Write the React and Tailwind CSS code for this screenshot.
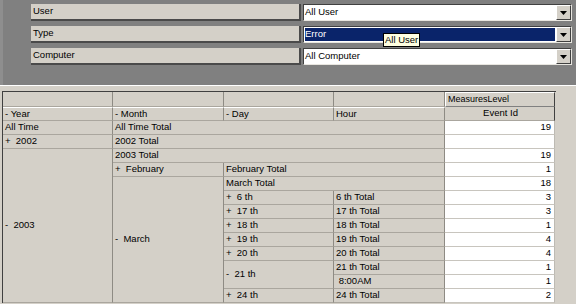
import React from "react";

const font = { fontFamily: '"Liberation Sans", Arial, sans-serif' };

const filters = [
  { label: "User", value: "All User" },
  { label: "Type", value: "Error", selected: true },
  { label: "Computer", value: "All Computer" },
];

const FilterRow = ({ label, value, selected }) => (
  <div className="flex h-[17px] items-stretch">
    <div className="ml-[28px] flex w-[270px] items-center border-r-2 border-b-2 border-[#4a4a4a] bg-[#d4d0c8] pl-[2px] text-[9.5px] text-black">
      {label}
    </div>
    <div className="ml-[2px] flex w-[269px] items-stretch border border-t-[#404040] border-l-[#404040] border-r-[#e8e6e0] border-b-[#e8e6e0] bg-white">
      <div className="flex flex-1 items-stretch p-[1px]">
        <div
          className={
            selected
              ? "flex flex-1 items-center bg-[#0a246a] text-[9.5px] text-white"
              : "flex flex-1 items-center text-[9.5px] text-black"
          }
        >
          {value}
        </div>
      </div>
      <div className="flex w-[15px] items-center justify-center border border-t-white border-l-white border-r-[#404040] border-b-[#404040] bg-[#d4d0c8]">
        <svg width="7" height="4" viewBox="0 0 7 4">
          <path d="M0 0h7L3.5 4z" fill="#000" />
        </svg>
      </div>
    </div>
  </div>
);

const cell = "flex items-center overflow-hidden whitespace-pre border-r border-b border-r-[#8e8b84] border-b-[#aaa69e] bg-[#d4d0c8] pl-[2px] text-[9.5px] text-black";
const val = "flex items-center justify-end border-r border-b border-r-[#bdbab3] border-b-[#c8c5be] bg-white pr-[3px] text-[9.5px] text-black";

export default function App() {
  return (
    <div className="h-[304px] w-[576px] overflow-hidden bg-[#d4d0c8]" style={font}>
      <div className="relative flex h-[85px] flex-col gap-[5px] border-l-[3px] border-[#8e8e8e] bg-[#808080] pt-[4px]">
        {filters.map((f) => (
          <FilterRow key={f.label} {...f} />
        ))}
        <div className="absolute top-[33px] left-[380px] flex h-[14px] items-center border border-black bg-[#ffffe1] px-[1px] text-[9.5px] leading-none text-black">
          All User
        </div>
      </div>

      <div className="border-t border-white pt-[5px]">
        <div className="ml-[2px] grid w-[554px] grid-cols-[110px_111px_110px_111px_110px] grid-rows-[15px_14px_repeat(13,14px)] border-t border-l border-t-[#404040] border-l-[#404040]">
          <div className={`${cell} col-start-1 row-start-1`}></div>
          <div className={`${cell} col-start-2 row-start-1`}></div>
          <div className={`${cell} col-start-3 row-start-1`}></div>
          <div className={`${cell} col-start-4 row-start-1`}></div>
          <div className="col-start-5 row-start-1 flex items-center border-t border-l border-r border-b border-t-white border-l-white border-r-[#404040] border-b-[#808080] bg-[#d4d0c8] pl-[2px] text-[9px] text-black">
            MeasuresLevel
          </div>

          <div className={`${cell} col-start-1 row-start-2 border-t border-t-white`}>- Year</div>
          <div className={`${cell} col-start-2 row-start-2 border-t border-t-white`}>- Month</div>
          <div className={`${cell} col-start-3 row-start-2 border-t border-t-white`}>- Day</div>
          <div className={`${cell} col-start-4 row-start-2 border-t border-t-white`}>Hour</div>
          <div className={`${cell} col-start-5 row-start-2 justify-center border-r-[#404040]`}>Event Id</div>

          <div className={`${cell} col-start-1 row-start-3`}>All Time</div>
          <div className={`${cell} col-start-2 col-span-3 row-start-3`}>All Time Total</div>
          <div className={`${val} col-start-5 row-start-3`}>19</div>

          <div className={`${cell} col-start-1 row-start-4`}>{"+  2002"}</div>
          <div className={`${cell} col-start-2 col-span-3 row-start-4`}>2002 Total</div>
          <div className={`${val} col-start-5 row-start-4`}></div>

          <div className={`${cell} col-start-1 row-start-5 row-span-11`}>{"-  2003"}</div>
          <div className={`${cell} col-start-2 col-span-3 row-start-5`}>2003 Total</div>
          <div className={`${val} col-start-5 row-start-5`}>19</div>

          <div className={`${cell} col-start-2 row-start-6`}>{"+  February"}</div>
          <div className={`${cell} col-start-3 col-span-2 row-start-6`}>February Total</div>
          <div className={`${val} col-start-5 row-start-6`}>1</div>

          <div className={`${cell} col-start-2 row-start-7 row-span-9`}>{"-  March"}</div>
          <div className={`${cell} col-start-3 col-span-2 row-start-7`}>March Total</div>
          <div className={`${val} col-start-5 row-start-7`}>18</div>

          <div className={`${cell} col-start-3 row-start-8`}>{"+  6 th"}</div>
          <div className={`${cell} col-start-4 row-start-8`}>6 th Total</div>
          <div className={`${val} col-start-5 row-start-8`}>3</div>

          <div className={`${cell} col-start-3 row-start-9`}>{"+  17 th"}</div>
          <div className={`${cell} col-start-4 row-start-9`}>17 th Total</div>
          <div className={`${val} col-start-5 row-start-9`}>3</div>

          <div className={`${cell} col-start-3 row-start-10`}>{"+  18 th"}</div>
          <div className={`${cell} col-start-4 row-start-10`}>18 th Total</div>
          <div className={`${val} col-start-5 row-start-10`}>1</div>

          <div className={`${cell} col-start-3 row-start-11`}>{"+  19 th"}</div>
          <div className={`${cell} col-start-4 row-start-11`}>19 th Total</div>
          <div className={`${val} col-start-5 row-start-11`}>4</div>

          <div className={`${cell} col-start-3 row-start-12`}>{"+  20 th"}</div>
          <div className={`${cell} col-start-4 row-start-12`}>20 th Total</div>
          <div className={`${val} col-start-5 row-start-12`}>4</div>

          <div className={`${cell} col-start-3 row-start-13 row-span-2`}>{"-  21 th"}</div>
          <div className={`${cell} col-start-4 row-start-13`}>21 th Total</div>
          <div className={`${val} col-start-5 row-start-13`}>1</div>
          <div className={`${cell} col-start-4 row-start-14`}>{" 8:00AM"}</div>
          <div className={`${val} col-start-5 row-start-14`}>1</div>

          <div className={`${cell} col-start-3 row-start-15`}>{"+  24 th"}</div>
          <div className={`${cell} col-start-4 row-start-15`}>24 th Total</div>
          <div className={`${val} col-start-5 row-start-15`}>2</div>
        </div>
      </div>
    </div>
  );
}
